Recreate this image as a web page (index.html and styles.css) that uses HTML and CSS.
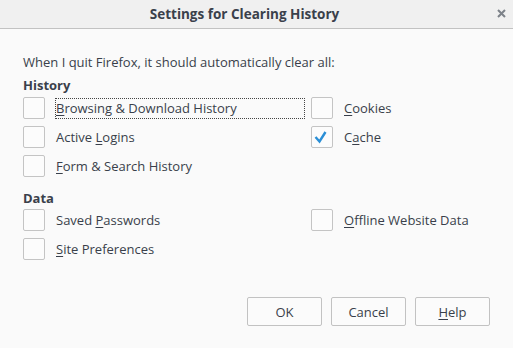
FILE: index.html
```html
<!DOCTYPE html>
<html>
<head>
<meta charset="utf-8">
<link rel="stylesheet" href="styles.css">
</head>
<body>
<div class="dialog">
  <div class="titlebar">
    <div class="title">Settings for Clearing History</div>
    <svg class="close" width="9" height="9" viewBox="0 0 9 9"><path d="M1 1 L8 8 M8 1 L1 8" stroke="#7d8289" stroke-width="2"/></svg>
  </div>
  <div class="content">
    <p class="intro">When I quit Firefox, it should automatically clear all:</p>
    <h3 class="heading">History</h3>
    <div class="grid">
      <div class="item"><span class="box"></span><span class="label focus"><u>B</u>rowsing &amp; Download History</span></div>
      <div class="item"><span class="box"></span><span class="label"><u>C</u>ookies</span></div>
      <div class="item"><span class="box"></span><span class="label">Active <u>L</u>ogins</span></div>
      <div class="item"><span class="box"><svg width="20" height="20" viewBox="0 0 20 20"><path d="M3.5 10 L7.5 14.5 L13.5 5" fill="none" stroke="#2b8fd6" stroke-width="2.4"/></svg></span><span class="label">C<u>a</u>che</span></div>
      <div class="item"><span class="box"></span><span class="label"><u>F</u>orm &amp; Search History</span></div>
    </div>
    <h3 class="heading data">Data</h3>
    <div class="grid">
      <div class="item"><span class="box"></span><span class="label">Saved <u>P</u>asswords</span></div>
      <div class="item"><span class="box"></span><span class="label"><u>O</u>ffline Website Data</span></div>
      <div class="item"><span class="box"></span><span class="label"><u>S</u>ite Preferences</span></div>
    </div>
    <div class="buttons">
      <button class="btn">OK</button>
      <button class="btn">Cancel</button>
      <button class="btn"><u>H</u>elp</button>
    </div>
  </div>
</div>
</body>
</html>
```
FILE: styles.css
```css
html, body {
  margin: 0;
  padding: 0;
}
body {
  width: 513px;
  height: 348px;
  background: #fafafa;
  font-family: "Open Sans", "Noto Sans", sans-serif;
  font-size: 13px;
  color: #393f4a;
  overflow: hidden;
}
.dialog {
  display: flex;
  flex-direction: column;
  height: 348px;
}
.titlebar {
  height: 28px;
  background: #f0f0f0;
  border-bottom: 1px solid #c2c2c2;
  display: flex;
  align-items: center;
  justify-content: center;
  position: relative;
  padding-right: 24px;
}
.title {
  font-weight: bold;
  font-size: 13.5px;
  color: #3a404b;
}
.close {
  position: absolute;
  right: 7px;
  top: 9px;
}
.content {
  padding: 24px 23px 0 23px;
  display: flex;
  flex-direction: column;
}
.intro {
  margin: 0;
  line-height: 18px;
}
.heading {
  margin: 5px 0 3px;
  font-size: 13px;
  font-weight: bold;
  line-height: 18px;
  color: #3a404b;
}
.heading.data {
  margin-top: 12px;
  margin-bottom: 2px;
}
.grid {
  display: grid;
  grid-template-columns: 282px auto;
  column-gap: 6px;
  row-gap: 7px;
}
.item {
  display: flex;
  align-items: center;
  height: 22px;
}
.box {
  width: 20px;
  height: 20px;
  border: 1px solid #c4c4c4;
  border-radius: 2px;
  background: #fcfcfc;
  flex: none;
  display: flex;
}
.label {
  margin-left: 10px;
  border: 1px dotted transparent;
  line-height: 19px;
  font-size: 13px;
}
.label.focus {
  border-color: #444;
  flex: 1;
}
u {
  text-decoration-thickness: 1px;
  text-underline-offset: 2px;
}
.buttons {
  display: flex;
  justify-content: flex-end;
  gap: 9px;
  margin-top: 37px;
}
.btn {
  width: 75px;
  height: 29px;
  border: 1px solid #c2c2c2;
  border-radius: 2px;
  background: #fbfbfb;
  font-family: "Open Sans", "Noto Sans", sans-serif;
  font-size: 13px;
  color: #393f4a;
  padding: 0;
}
```
